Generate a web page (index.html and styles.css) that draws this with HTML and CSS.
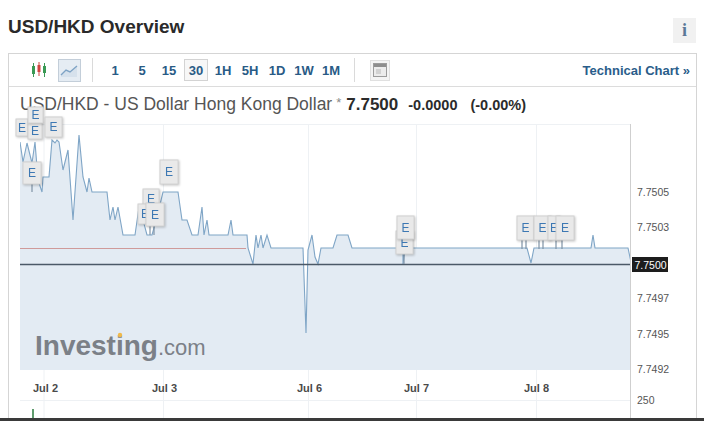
FILE: index.html
```html
<!DOCTYPE html>
<html>
<head>
<meta charset="utf-8">
<link rel="stylesheet" href="styles.css">
</head>
<body>
<div class="frame">
  <div class="title-row">
    <h1 class="title">USD/HKD Overview</h1>
    <span class="info">i</span>
  </div>
  <div class="panel">
    <div class="toolbar">
      <span class="candles">
        <svg width="16" height="18" viewBox="0 0 16 18">
          <line x1="2.5" y1="2" x2="2.5" y2="16" stroke="#3a9a55" stroke-width="1"/>
          <rect x="1" y="5" width="3" height="8" fill="#3a9a55"/>
          <line x1="8" y1="1" x2="8" y2="15" stroke="#d0453f" stroke-width="1"/>
          <rect x="6.5" y="4" width="3" height="7" fill="#d0453f"/>
          <line x1="13.5" y1="2" x2="13.5" y2="16" stroke="#3a9a55" stroke-width="1"/>
          <rect x="12" y="5" width="3" height="7" fill="#3a9a55"/>
        </svg>
      </span>
      <span class="line-btn">
        <svg width="19" height="15" viewBox="0 0 19 15">
          <path d="M1 12 L6 7 L10 9 L17 3 L17 14 L1 14 Z" fill="#d6e1ec"/>
          <path d="M1 12 L6 7 L10 9 L17 3" fill="none" stroke="#7ea3c5" stroke-width="1.4"/>
        </svg>
      </span>
      <span class="sep"></span>
      <div class="intervals">
        <span class="iv">1</span>
        <span class="iv">5</span>
        <span class="iv">15</span>
        <span class="iv active">30</span>
        <span class="iv">1H</span>
        <span class="iv">5H</span>
        <span class="iv">1D</span>
        <span class="iv">1W</span>
        <span class="iv">1M</span>
      </div>
      <span class="sep sep2"></span>
      <span class="cal-btn">
        <svg width="14" height="14" viewBox="0 0 14 14">
          <rect x="0.5" y="0.5" width="13" height="13" fill="#ececec" stroke="#9c9c9c"/>
          <rect x="1" y="1" width="12" height="3" fill="#8e8e8e"/>
          <rect x="3" y="6" width="5" height="5" fill="#d2d2d2"/>
        </svg>
      </span>
      <a class="tech-link">Technical Chart &raquo;</a>
    </div>
    <div class="quote">
      <span class="q-name">USD/HKD - US Dollar Hong Kong Dollar</span>
      <span class="q-star">*</span>
      <span class="q-price">7.7500</span>
      <span class="q-chg">-0.0000</span>
      <span class="q-pct">(-0.00%)</span>
    </div>
    <svg class="chart" width="687" height="300" viewBox="9 122 687 300">
      <defs>
        <clipPath id="plot"><rect x="20" y="124" width="610" height="246"/></clipPath>
      </defs>
      <rect x="20" y="124" width="610" height="246" fill="#ffffff"/>
      <line class="grid" x1="20" y1="124.5" x2="630" y2="124.5"/>
      <line class="grid" x1="44" y1="124" x2="44" y2="418"/>
      <line class="grid" x1="163.5" y1="124" x2="163.5" y2="418"/>
      <line class="grid" x1="308.5" y1="124" x2="308.5" y2="418"/>
      <line class="grid" x1="416.5" y1="124" x2="416.5" y2="418"/>
      <line class="grid" x1="536.5" y1="124" x2="536.5" y2="418"/>
      <g clip-path="url(#plot)">
        <path class="area" d="M20,142 L23,162 L27,143 L32,163 L35,142 L38,180 L42,192 L43,177 L49,177 L52,140 L55,143 L57,140 L59,142 L63,170 L68,150 L73,220 L79,135 L83,177 L87,192 L89,178 L92,192 L107,192 L110,220 L113,207 L115,220 L118,207 L123,235 L135,235 L139,207 L143,220 L147,235 L152,235 L157,217 L163,192 L178,192 L182,220 L187,220 L192,235 L198,235 L202,207 L204,235 L207,220 L209,235 L228,235 L231,220 L233,235 L247,235 L248,248 L253,264 L256,235 L258,248 L261,235 L263,248 L267,235 L271,248 L303,248 L306,333 L308,250 L312,235 L315,257 L318,264 L321,248 L333,248 L337,235 L348,235 L352,248 L403,248 L403,264 L405,248 L527,248 L531,263 L534,248 L591,248 L593,235 L595,248 L628,248 L631,262 L631,370 L20,370 Z"/>
        <line x1="20" y1="248.5" x2="246" y2="248.5" stroke="#cf9a9a" stroke-width="1"/>
        <path class="price" d="M20,142 L23,162 L27,143 L32,163 L35,142 L38,180 L42,192 L43,177 L49,177 L52,140 L55,143 L57,140 L59,142 L63,170 L68,150 L73,220 L79,135 L83,177 L87,192 L89,178 L92,192 L107,192 L110,220 L113,207 L115,220 L118,207 L123,235 L135,235 L139,207 L143,220 L147,235 L152,235 L157,217 L163,192 L178,192 L182,220 L187,220 L192,235 L198,235 L202,207 L204,235 L207,220 L209,235 L228,235 L231,220 L233,235 L247,235 L248,248 L253,264 L256,235 L258,248 L261,235 L263,248 L267,235 L271,248 L303,248 L306,333 L308,250 L312,235 L315,257 L318,264 L321,248 L333,248 L337,235 L348,235 L352,248 L403,248 L403,264 L405,248 L527,248 L531,263 L534,248 L591,248 L593,235 L595,248 L628,248 L631,262"/>
        <line x1="20" y1="264.5" x2="630" y2="264.5" stroke="#4b5967" stroke-width="1.6"/>
      </g>
      <line class="axis" x1="630.5" y1="124" x2="630.5" y2="422"/>
      <line class="grid" x1="20" y1="400.5" x2="630" y2="400.5"/>

      <g class="stems">
        <line x1="32" y1="184" x2="32" y2="192"/>
        <line x1="150" y1="224" x2="150" y2="235"/>
        <line x1="154" y1="226" x2="154" y2="235"/>
        <line x1="404" y1="254" x2="404" y2="264"/>
        <line x1="522" y1="240" x2="522" y2="249"/>
        <line x1="526" y1="240" x2="526" y2="249"/>
        <line x1="539" y1="240" x2="539" y2="249"/>
        <line x1="543" y1="240" x2="543" y2="249"/>
        <line x1="556" y1="240" x2="556" y2="249"/>
        <line x1="562" y1="240" x2="562" y2="249"/>
      </g>

      <g class="ev"><rect x="16" y="119" width="12" height="17"/><text x="22" y="131.5">E</text></g>
      <g class="ev"><rect x="28" y="122" width="14" height="17"/><text x="35" y="134.5">E</text></g>
      <g class="ev"><rect x="28" y="107" width="15" height="16"/><text x="35.5" y="119">E</text></g>
      <g class="ev"><rect x="45" y="117" width="17" height="20"/><text x="53.5" y="131">E</text></g>
      <g class="ev"><rect x="23" y="162" width="18" height="22"/><text x="32" y="177">E</text></g>

      <g class="ev"><rect x="160" y="160" width="18" height="24"/><text x="169" y="176">E</text></g>
      <g class="ev"><rect x="143" y="189" width="16" height="21"/><text x="151" y="203">E</text></g>
      <g class="ev"><rect x="138" y="204" width="14" height="20"/><text x="145" y="218">E</text></g>
      <g class="ev"><rect x="146" y="203" width="18" height="23"/><text x="155" y="218.5">E</text></g>

      <g class="ev"><rect x="396" y="231" width="17" height="23"/><text x="404.5" y="246.5">E</text></g>
      <g class="ev"><rect x="397" y="216" width="17" height="23"/><text x="405.5" y="231.5">E</text></g>

      <g class="ev"><rect x="517" y="216" width="17" height="24"/><text x="525.5" y="232">E</text></g>
      <g class="ev"><rect x="534" y="216" width="17" height="24"/><text x="542.5" y="232">E</text></g>
      <g class="ev"><rect x="548" y="216" width="12" height="24"/><text x="554" y="232">E</text></g>
      <g class="ev"><rect x="556" y="216" width="18" height="24"/><text x="565" y="232">E</text></g>

      <text class="wm" x="35" y="355"><tspan class="wm-b">Investing</tspan><tspan class="wm-r">.com</tspan></text>
      <circle cx="120" cy="335" r="2.2" fill="#f0b94a"/>

      <text class="ylab" x="637" y="196">7.7505</text>
      <text class="ylab" x="637" y="231">7.7503</text>
      <rect x="632" y="257" width="36" height="15" fill="#1d1d1d"/>
      <text class="ylab cur" x="634.5" y="268.5">7.7500</text>
      <text class="ylab" x="637" y="302">7.7497</text>
      <text class="ylab" x="637" y="338">7.7495</text>
      <text class="ylab" x="637" y="373">7.7492</text>
      <text class="ylab" x="637" y="404">250</text>

      <text class="xlab" x="33" y="392">Jul 2</text>
      <text class="xlab" x="152" y="392">Jul 3</text>
      <text class="xlab" x="297" y="392">Jul 6</text>
      <text class="xlab" x="404" y="392">Jul 7</text>
      <text class="xlab" x="524" y="392">Jul 8</text>

      <rect x="32" y="409" width="2" height="12" fill="#5f9c6e"/>
    </svg>
  </div>
</div>
</body>
</html>
```

FILE: styles.css
```css
body {
  margin: 0;
  background: #ffffff;
  font-family: "Liberation Sans", Arial, sans-serif;
  color: #333;
}

.frame {
  height: 418px;
  overflow: hidden;
  border-bottom: 3px solid #3a3a3a;
  padding: 0 7px 0 8px;
}

.title-row {
  display: flex;
  justify-content: space-between;
  align-items: flex-start;
  padding-top: 17px;
}

.title {
  margin: 0;
  font-size: 19px;
  line-height: 19px;
  font-weight: bold;
  color: #2a2a2a;
}

.info {
  margin-top: 1px;
  margin-right: 1px;
  width: 23px;
  height: 25px;
  background: #f1f1f1;
  display: flex;
  align-items: center;
  justify-content: center;
  font-family: "Liberation Serif", serif;
  font-weight: bold;
  font-size: 18px;
  color: #5a7898;
}

.panel {
  margin-top: 10px;
  border: 1px solid #d5d5d5;
  border-bottom: none;
}

.toolbar {
  display: flex;
  align-items: center;
  height: 32px;
  border-bottom: 1px solid #dcdcdc;
  padding: 0 6px 0 22px;
}

.candles {
  display: flex;
  width: 16px;
  margin-right: 11px;
}

.line-btn {
  display: flex;
  align-items: center;
  justify-content: center;
  width: 21px;
  height: 21px;
  background: #e5ecf3;
  border: 1px solid #c3ced9;
  margin-right: 11px;
}

.sep {
  width: 1px;
  height: 24px;
  background: #dadada;
  margin-right: 10px;
}

.sep2 {
  margin-left: 11px;
  margin-right: 15px;
}

.intervals {
  display: flex;
  gap: 3px;
}

.iv {
  width: 24px;
  height: 22px;
  box-sizing: border-box;
  display: flex;
  align-items: center;
  justify-content: center;
  font-size: 13px;
  font-weight: bold;
  color: #295b86;
}

.iv.active {
  border: 1px solid #d3d3d3;
  background: #f7f7f7;
}

.cal-btn {
  display: flex;
  align-items: center;
  justify-content: center;
  width: 18px;
  height: 19px;
  background: #f4f4f4;
  border: 1px solid #e0e0e0;
}

.tech-link {
  margin-left: auto;
  font-size: 13px;
  font-weight: bold;
  color: #2a5d8a;
}

.quote {
  display: flex;
  align-items: baseline;
  height: 35px;
  line-height: 35px;
  padding-left: 11px;
  white-space: nowrap;
}

.q-name {
  font-size: 17.5px;
  color: #555;
}

.q-star {
  margin-left: 4px;
  font-size: 13px;
  color: #8a8a8a;
  position: relative;
  top: -3px;
}

.q-price {
  margin-left: 5px;
  font-size: 17px;
  font-weight: bold;
  color: #2b2b2b;
}

.q-chg {
  margin-left: 10px;
  font-size: 14.5px;
  font-weight: bold;
  color: #2b2b2b;
}

.q-pct {
  margin-left: 13px;
  font-size: 14.5px;
  font-weight: bold;
  color: #2b2b2b;
}

.chart {
  display: block;
  overflow: visible;
}

.chart .grid {
  stroke: #eef1f4;
  stroke-width: 1;
}

.chart .axis {
  stroke: #cfcfcf;
  stroke-width: 1;
}

.chart .area {
  fill: #e3ebf3;
}

.chart .price {
  fill: none;
  stroke: #7fa5c6;
  stroke-width: 1.1;
}

.chart .stems line {
  stroke: #7f93a6;
  stroke-width: 1.2;
}

.chart .ev {
  filter: drop-shadow(1px 1px 1px rgba(0, 0, 0, 0.22));
}

.chart .ev rect {
  fill: #e9e9e9;
  stroke: #d2d2d2;
  stroke-width: 1;
}

.chart .ev text {
  fill: #3d78b3;
  font-family: "Liberation Sans", Arial, sans-serif;
  font-size: 12px;
  text-anchor: middle;
}

.chart .wm {
  fill: #7b8087;
  font-family: "Liberation Sans", Arial, sans-serif;
}

.chart .wm-b {
  font-size: 28px;
  font-weight: bold;
}

.chart .wm-r {
  font-size: 22px;
}

.chart .ylab {
  fill: #555;
  font-family: "Liberation Sans", Arial, sans-serif;
  font-size: 10.5px;
}

.chart .ylab.cur {
  fill: #ffffff;
}

.chart .xlab {
  fill: #4a4a4a;
  font-family: "Liberation Sans", Arial, sans-serif;
  font-size: 11px;
  font-weight: bold;
}
```
